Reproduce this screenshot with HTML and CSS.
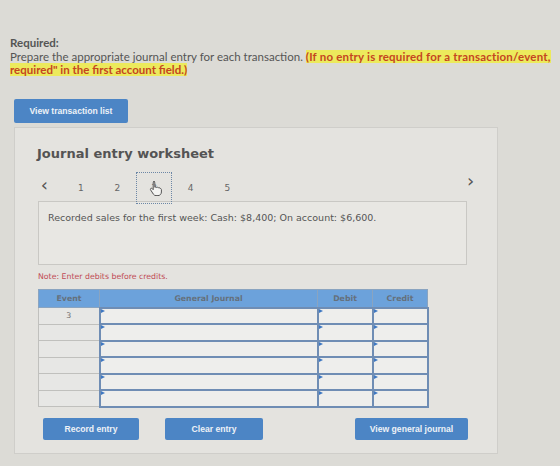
FILE: index.html
```html
<!DOCTYPE html>
<html lang="en">
<head>
  <meta charset="UTF-8" />
  <title>Journal entry worksheet</title>
  <link rel="stylesheet" href="styles.css">
</head>
<body>
  <section class="prompt">
    <p class="prompt-title">Required:</p>
    <p class="prompt-text">Prepare the appropriate journal entry for each transaction. <mark class="wide">(If no entry is required for a transaction/event,</mark><br><mark>required" in the first account field.)</mark></p>
  </section>

  <button class="btn btn-list">View transaction list</button>

  <div class="worksheet">
    <h2 class="worksheet-title">Journal entry worksheet</h2>

    <div class="steps">
      <span class="step arrow">&lsaquo;</span>
      <span class="step">1</span>
      <span class="step">2</span>
      <span class="step current">3
        <svg class="cursor" width="14" height="16" viewBox="0 0 14 16">
          <path d="M4.5 1.5c.8 0 1.3.5 1.3 1.3v4.4l.3-.1c.6-.3 1.3-.1 1.6.4.5-.4 1.3-.3 1.7.2.5-.3 1.3-.1 1.6.5l.1.3c.6-.2 1.3.3 1.3 1v2.5c0 2-1.4 3.6-3.4 3.6H7c-1.1 0-2-.5-2.6-1.4L1.6 9.9c-.4-.6-.2-1.3.4-1.6.5-.2 1.1 0 1.4.4l.8 1V2.8c0-.8.5-1.3 1.3-1.3z" fill="#f4f4f2" stroke="#555" stroke-width="1"/>
        </svg>
      </span>
      <span class="step">4</span>
      <span class="step">5</span>
      <span class="step arrow next">&rsaquo;</span>
    </div>

    <div class="transaction">Recorded sales for the first week: Cash: $8,400; On account: $6,600.</div>

    <p class="note">Note: Enter debits before credits.</p>

    <table class="journal">
      <thead>
        <tr>
          <th class="col-event">Event</th>
          <th class="col-account">General Journal</th>
          <th class="col-amount">Debit</th>
          <th class="col-amount">Credit</th>
        </tr>
      </thead>
      <tbody>
        <tr><td class="event">3</td><td class="field"></td><td class="field"></td><td class="field"></td></tr>
        <tr><td class="event"></td><td class="field"></td><td class="field"></td><td class="field"></td></tr>
        <tr><td class="event"></td><td class="field"></td><td class="field"></td><td class="field"></td></tr>
        <tr><td class="event"></td><td class="field"></td><td class="field"></td><td class="field"></td></tr>
        <tr><td class="event"></td><td class="field"></td><td class="field"></td><td class="field"></td></tr>
        <tr><td class="event"></td><td class="field"></td><td class="field"></td><td class="field"></td></tr>
      </tbody>
    </table>

    <div class="actions">
      <button class="btn btn-record">Record entry</button>
      <button class="btn btn-clear">Clear entry</button>
      <button class="btn btn-journal">View general journal</button>
    </div>
  </div>
</body>
</html>
```

FILE: styles.css
```css
html, body {
  margin: 0;
  height: 100%;
}

body {
  background-color: #dcdbd6;
  color: #555;
  font-family: Lato, "Open Sans", sans-serif;
  overflow: hidden;
}

/* Instructions at the top */
.prompt {
  padding: 36px 10px 0 10px;
}

.prompt p {
  margin: 0;
  font-size: 11.5px;
  line-height: 13.5px;
}

.prompt-title {
  font-weight: 700;
}

.prompt-text {
  white-space: nowrap;
}

.prompt-text mark {
  background-color: #ecea5c;
  color: #c5451f;
  font-weight: 700;
}

.prompt-text mark.wide {
  letter-spacing: 0.2px;
}

/* Buttons */
.btn {
  display: block;
  border: none;
  border-radius: 2px;
  background-color: #4c85c5;
  color: #eef2f7;
  font-family: "Liberation Sans", Arial, sans-serif;
  font-size: 8.6px;
  font-weight: 700;
  height: 24px;
  padding: 0;
  cursor: pointer;
}

.btn-list {
  margin: 22px 0 0 14px;
  width: 114px;
}

/* Worksheet panel */
.worksheet {
  margin: 4px 0 0 14px;
  width: 484px;
  height: 327px;
  box-sizing: border-box;
  border: 1px solid #cfceca;
  background-color: #e4e3df;
  padding: 0 0 0 24px;
}

.worksheet-title {
  margin: 18px 0 0 -2px;
  font-family: "DejaVu Sans", Verdana, sans-serif;
  font-size: 13px;
  font-weight: 700;
  color: #545454;
  line-height: 16px;
}

.steps {
  display: flex;
  align-items: center;
  height: 32px;
  margin: 10px 0 0 -13px;
  font-family: "DejaVu Sans", Verdana, sans-serif;
  font-size: 9px;
  color: #666;
}

.step {
  width: 36.6px;
  text-align: center;
}

.step.arrow {
  font-size: 18px;
  color: #555;
  line-height: 18px;
  margin-top: -6px;
}

.step.next {
  margin-left: auto;
  margin-right: 8px;
  margin-top: -14px;
}

.step.current {
  position: relative;
  box-sizing: border-box;
  height: 32px;
  line-height: 30px;
  border: 1px dotted #6c87a6;
  color: #777;
}

.cursor {
  position: absolute;
  left: 12px;
  top: 7px;
}

.transaction {
  margin: -3px 30px 0 -1px;
  height: 64px;
  box-sizing: border-box;
  border: 1px solid #c9c8c4;
  background-color: #e8e7e3;
  padding: 10px 9px;
  font-family: "DejaVu Sans", Verdana, sans-serif;
  font-size: 9.5px;
  color: #555;
}

.note {
  margin: 7px 0 0 -1px;
  font-family: "DejaVu Sans", Verdana, sans-serif;
  font-size: 7.8px;
  color: #c04b55;
}

/* Journal table */
.journal {
  margin: 8px 0 0 -1px;
  border-collapse: collapse;
  font-family: "DejaVu Sans", Verdana, sans-serif;
  font-size: 7.8px;
}

.journal th {
  height: 17px;
  padding: 0;
  background-color: #6ca2db;
  color: #65707c;
  font-weight: 700;
  border: 1px solid #8aa4c0;
}

.col-event { width: 60px; }
.col-account { width: 217px; }
.col-amount { width: 54px; }

.journal td {
  height: 14.5px;
  padding: 0;
}

.journal td.event {
  border: 1px solid #c0c0bd;
  background-color: #e7e7e5;
  text-align: center;
  color: #666;
}

.journal td.field {
  position: relative;
  border: 2px solid #6f8db4;
  background-color: #eeeeec;
}

/* little marker in the corner of each dropdown field */
.journal td.field::before {
  content: "";
  position: absolute;
  left: 0;
  top: 0;
  border-left: 4px solid #3f78c2;
  border-top: 2.5px solid transparent;
  border-bottom: 2.5px solid transparent;
}

/* Bottom buttons */
.actions {
  display: flex;
  margin: 10px 0 0 4px;
}

.actions .btn {
  height: 22px;
}

.btn-record { width: 96px; }
.btn-clear { width: 98px; margin-left: 26px; }
.btn-journal { width: 113px; margin-left: 92px; }
```
